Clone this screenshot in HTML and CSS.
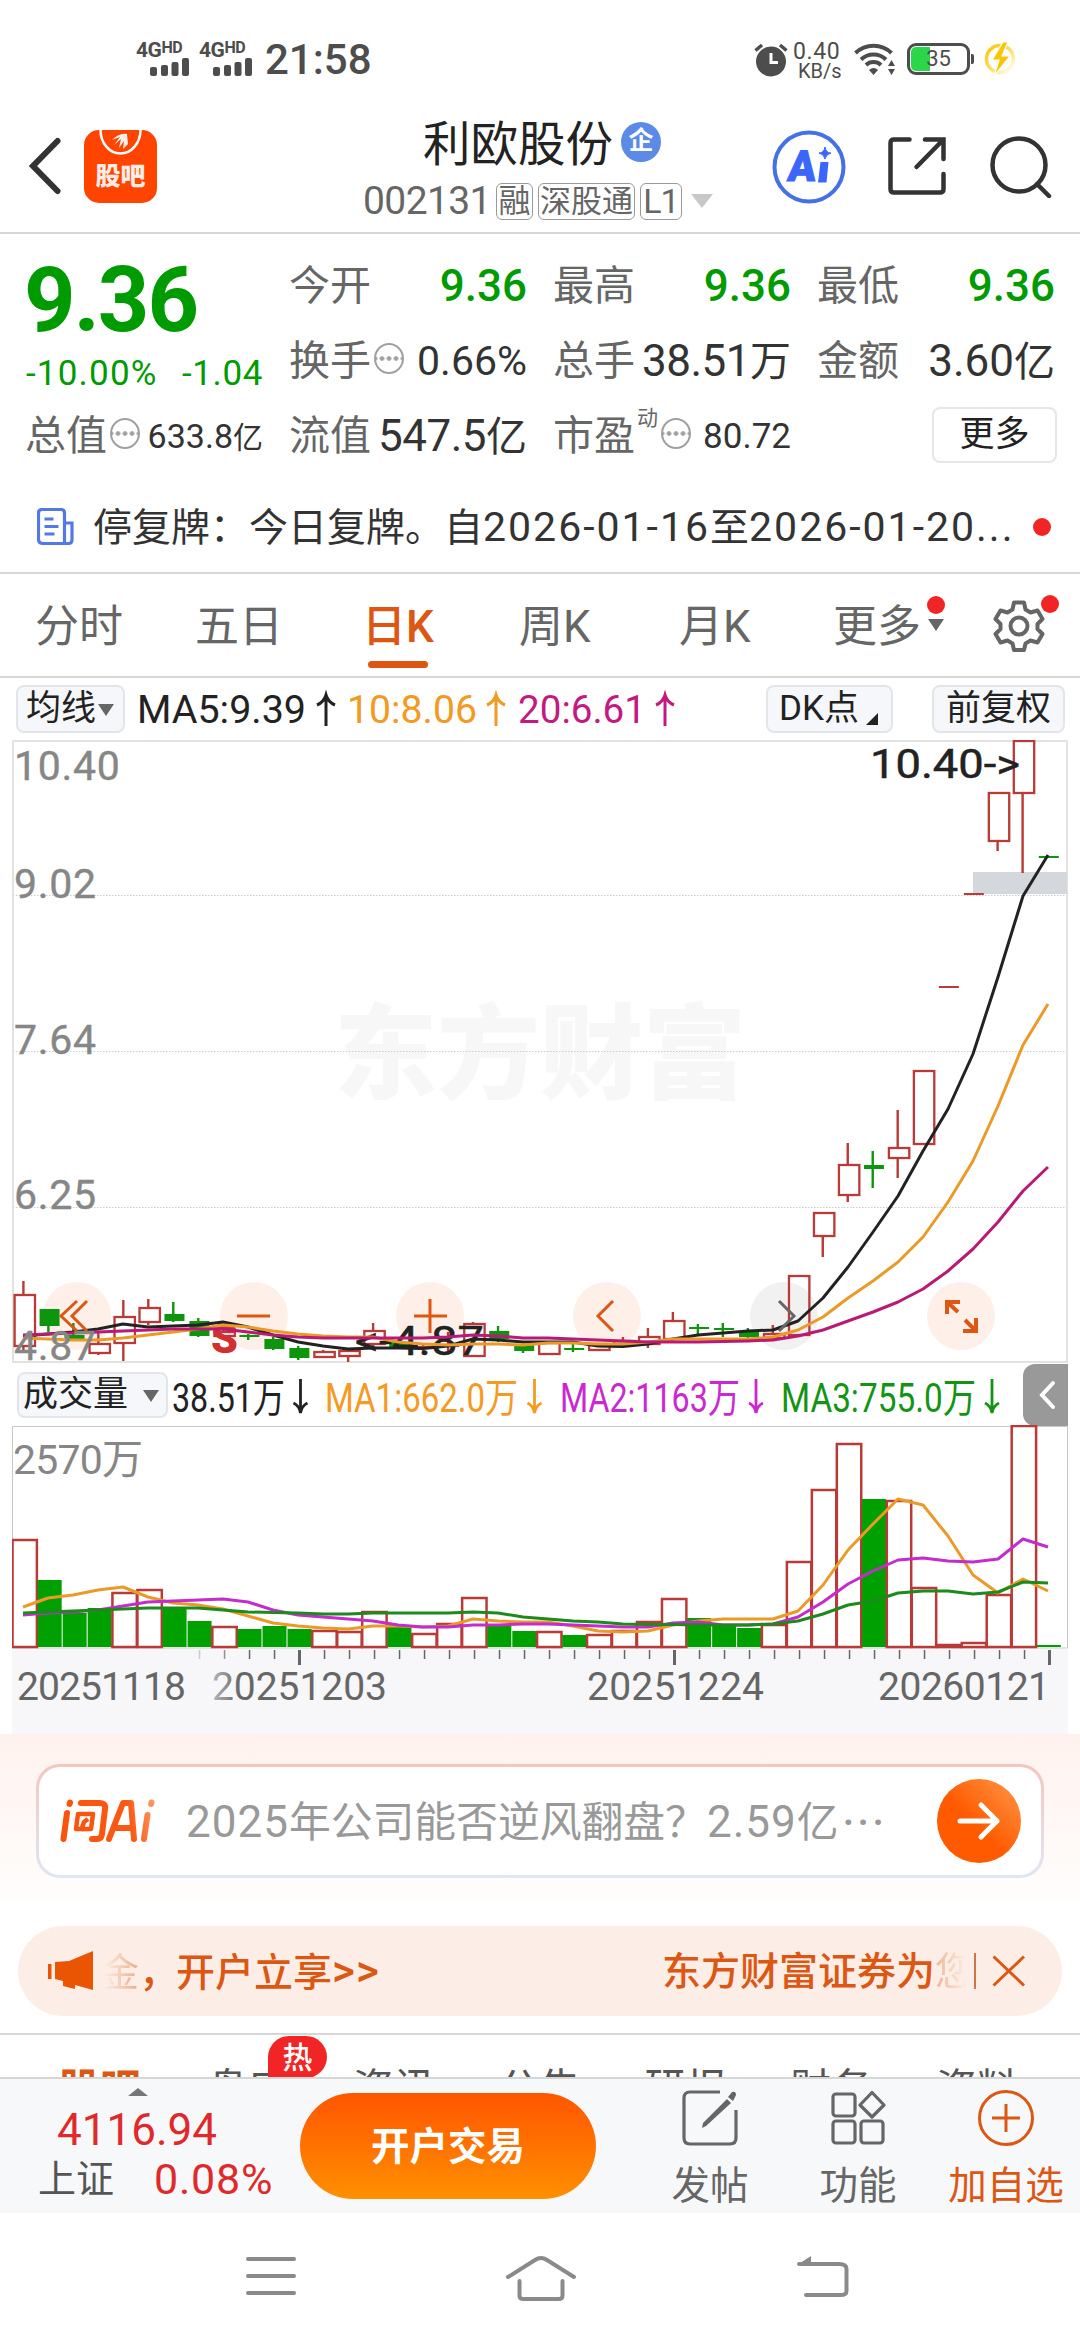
FILE: index.html
```html
<!DOCTYPE html>
<html lang="zh-CN">
<head>
<meta charset="utf-8">
<title>利欧股份 002131</title>
<link rel="stylesheet" href="styles.css">
</head>
<body>
<div class="phone">
  <div class="status">
    <div class="sig"><span class="net">4G<sup>HD</sup></span><svg width="40" height="18" viewBox="0 0 40 18"><g fill="#4d4d4d"><rect x="0" y="9" width="7" height="9" rx="2"/><rect x="11" y="7" width="7" height="11" rx="2"/><rect x="21.500" y="4" width="7" height="14" rx="2"/><rect x="32" y="0" width="7" height="18" rx="2"/></g></svg></div>
    <div class="sig"><span class="net">4G<sup>HD</sup></span><svg width="40" height="18" viewBox="0 0 40 18"><g fill="#4d4d4d"><rect x="0" y="9" width="7" height="9" rx="2"/><rect x="11" y="7" width="7" height="11" rx="2"/><rect x="21.500" y="4" width="7" height="14" rx="2"/><rect x="32" y="0" width="7" height="18" rx="2"/></g></svg></div>
    <span class="clock">21:58</span>
    <div class="status-right">
      <svg class="alarm" width="34" height="34" viewBox="0 0 34 34"><circle cx="17" cy="18.500" r="15" fill="#4d4d4d"/><path d="M1.500 7.500 8 2M32.500 7.500 26 2" stroke="#4d4d4d" stroke-width="3.500"/><path d="M17 10v9.500h7" fill="none" stroke="#fff" stroke-width="3"/></svg>
      <div class="speed"><span>0.40</span><span class="kb">KB/s</span></div>
      <svg class="wifi" width="42" height="34" viewBox="0 0 42 34"><g fill="none" stroke="#4d4d4d" stroke-width="4"><path d="M1.500 11a26 26 0 0 1 36 0"/><path d="M7 17.500a18 18 0 0 1 25 0"/><path d="M12 23a11 11 0 0 1 15 0"/></g><path d="M15 28q4.500-4 9 0l-4.500 5z" fill="#4d4d4d"/><path d="M34 24l3.500-6 3.500 6zM34 27l3.500 6 3.500-6z" fill="#4d4d4d"/></svg>
      <div class="battery"><span class="level"></span><span class="pct">35</span></div>
      <svg class="bolt" width="34" height="34" viewBox="0 0 34 34"><defs><linearGradient id="bg" x1="0" y1="0" x2="1" y2="1"><stop offset="0" stop-color="#fbc503"/><stop offset=".6" stop-color="#fde37a"/><stop offset=".9" stop-color="#fffbe8"/></linearGradient></defs><circle cx="17" cy="17" r="13.500" fill="none" stroke="url(#bg)" stroke-width="3.500"/><path d="M20 0 9 18h7l-5 16 16-20h-8l6-14z" fill="#fbc503" stroke="#fff" stroke-width="1.200"/></svg>
    </div>
  </div>

  <header class="head">
    <svg class="back" width="34" height="58" viewBox="0 0 34 58"><path d="M29.500 4 5 29 29.500 54" fill="none" stroke="#333" stroke-width="6" stroke-linecap="round"/></svg>
    <div class="logo"><svg width="73" height="30" viewBox="0 0 73 30"><path d="M16.500 0a20 23.500 0 0 0 40 0" fill="none" stroke="#fff" stroke-width="2.500"/><path d="M28 10C33 5 38 3 43 4L44 14 39 19 40 11 35 18 37 9 30 15 36 7z" fill="#fff" opacity=".92"/></svg><span>股吧</span></div>
    <div class="title">
      <div class="name"><span>利欧股份</span><i>企</i></div>
      <div class="code"><span class="num">002131</span><b>融</b><b class="w3">深股通</b><b class="l1">L1</b><i class="tri"></i></div>
    </div>
    <svg class="ai" width="74" height="74" viewBox="0 0 74 74"><circle cx="37" cy="37" r="34.500" fill="#fff" stroke="#4470ea" stroke-width="4"/><path d="M53 17q1 6 6 6-5 1-6 6-1-5-6-6 5 0 6-6z" fill="#3a66fb" stroke="#3a66fb"/><text x="15" y="51" font-size="43" font-weight="900" fill="#3a66fb" stroke="#3a66fb" stroke-width="1" textLength="28" lengthAdjust="spacingAndGlyphs" transform="skewX(-6) translate(5 0)">A</text><path d="M48.500 32h8l-2 20.500h-8.500z" fill="#3a66fb"/></svg>
    <svg class="share" width="58" height="58" viewBox="0 0 58 58"><path d="M21.500 2.500H6q-3.500 0-3.500 3.500v46q0 3.500 3.500 3.500h46q3.500 0 3.500-3.500V37M37 2.500h18.500V22M54 4 28.500 30" fill="none" stroke="#333" stroke-width="4.500" stroke-linecap="round"/></svg>
    <svg class="search" width="62" height="62" viewBox="0 0 62 62"><path d="M47 48 59 60" stroke="#333" stroke-width="4.500" stroke-linecap="round"/><circle cx="29" cy="29" r="26.500" fill="none" stroke="#333" stroke-width="4.500"/></svg>
  </header>

  <section class="quote">
    <div class="price"><div class="last">9.36</div><div class="chg"><span>-10.00%</span><span>-1.04</span></div></div>
    <div class="cell"><span>今开</span><em class="g">9.36</em></div>
    <div class="cell"><span>最高</span><em class="g">9.36</em></div>
    <div class="cell"><span>最低</span><em class="g">9.36</em></div>
    <div class="cell"><span>换手</span><i class="info"></i><em class="md">0.66%</em></div>
    <div class="cell"><span>总手</span><em class="n">38.51<u>万</u></em></div>
    <div class="cell"><span>金额</span><em>3.60<u>亿</u></em></div>
    <div class="cell"><span>总值</span><i class="info"></i><em class="sm s2">633.8<u>亿</u></em></div>
    <div class="cell"><span>流值</span><em class="n">547.5<u>亿</u></em></div>
    <div class="cell"><span>市盈</span><small>动</small><i class="info"></i><em class="sm">80.72</em></div>
    <div class="cell end"><button class="more">更多</button></div>
  </section>

  <div class="notice">
    <svg width="37" height="38" viewBox="0 0 37 38"><path d="M27.500 35.500H6q-4.500 0-4.500-4.500V5q0-3.500 3.500-3.500h19q3.500 0 3.500 3.500v30.500h4q3.500 0 3.500-3.500V15h-7M7.500 11h9M7.500 18.500h14M7.500 26h10" fill="none" stroke="#5478e4" stroke-width="3.200"/></svg>
    <p>停复牌：今日复牌。自<span>2026-01-16</span>至<span>2026-01-20...</span></p>
    <i class="dot"></i>
  </div>

  <nav class="period">
    <span>分时</span><span>五日</span><span class="on">日K</span><span>周K</span><span>月K</span>
    <span class="pm">更多<i class="dot"></i><i class="tri"></i></span>
    <span class="gear"><svg width="52" height="52" viewBox="0 0 52 52"><path d="M21 2.500h10l1.500 7 5 3 7-2 5 8.500-5 5v5l5 5-5 8.500-7-2-5 3-1.500 6.500H21l-1.500-6.500-5-3-7 2-5-8.500 5-5v-5l-5-5 5-8.500 7 2 5-3z" fill="none" stroke="#666" stroke-width="4" stroke-linejoin="round"/><circle cx="26" cy="26" r="8.500" fill="none" stroke="#666" stroke-width="4"/></svg><i class="dot"></i></span>
  </nav>

  <div class="ma">
    <div class="btn b1">均线<i class="tri"></i></div>
    <svg class="legend" width="560" height="48" viewBox="0 0 560 48">
      <g font-size="39.500">
        <text x="1" y="39" fill="#222" textLength="169" lengthAdjust="spacingAndGlyphs">MA5:9.39</text>
        <text x="211" y="39" fill="#f29a22" textLength="130" lengthAdjust="spacingAndGlyphs">10:8.06</text>
        <text x="382" y="39" fill="#c41a7f" textLength="128" lengthAdjust="spacingAndGlyphs">20:6.61</text>
      </g>
      <g fill="none" stroke-width="3"><path stroke="#222" d="M190 42V11M181 21q7-3 9-10 2 7 9 10"/><path stroke="#f29a22" d="M360 42V11M351 21q7-3 9-10 2 7 9 10"/><path stroke="#c41a7f" d="M529 42V11M520 21q7-3 9-10 2 7 9 10"/></g>
    </svg>
    <div class="btn b2">DK点<svg width="12" height="12" viewBox="0 0 12 12"><path d="M12 0v12H0z" fill="#222"/></svg></div>
    <div class="btn b3">前复权</div>
  </div>

  <svg id="kline" class="kline" width="1056" height="623" viewBox="12 741 1056 623"></svg>

  <div class="ma vol">
    <div class="btn b4">成交量<i class="tri"></i></div>
    <svg class="legend" width="836" height="54" viewBox="172 1370 836 54">
      <g font-size="40">
        <text x="172" y="1412" fill="#222" textLength="113" lengthAdjust="spacingAndGlyphs">38.51万</text>
        <text x="325" y="1412" fill="#f59a22" textLength="193" lengthAdjust="spacingAndGlyphs">MA1:662.0万</text>
        <text x="560" y="1412" fill="#cb29cf" textLength="180" lengthAdjust="spacingAndGlyphs">MA2:1163万</text>
        <text x="781" y="1412" fill="#149414" textLength="195" lengthAdjust="spacingAndGlyphs">MA3:755.0万</text>
      </g>
      <g fill="none" stroke-width="2.800"><path stroke="#222" d="M300.500 1379v33M293.500 1403q6 3 7 10 1-7 7-10"/><path stroke="#f59a22" d="M534.500 1379v33M527.500 1403q6 3 7 10 1-7 7-10"/><path stroke="#cb29cf" d="M756 1379v33M749 1403q6 3 7 10 1-7 7-10"/><path stroke="#149414" d="M992 1379v33M985 1403q6 3 7 10 1-7 7-10"/></g>
    </svg>
    <div class="handle"><svg width="18" height="30" viewBox="0 0 18 30"><path d="M15 3 4 15l11 12" fill="none" stroke="#fff" stroke-width="4" stroke-linecap="round"/></svg></div>
  </div>

  <svg id="volume" class="kline" width="1056" height="309" viewBox="12 1426 1056 309"></svg>

  <section class="ask">
    <div class="ask-card">
      <svg width="102" height="46" viewBox="0 0 100 46"><defs><linearGradient id="lg" gradientUnits="userSpaceOnUse" x1="0" x2="98" y1="30" y2="10"><stop offset="0" stop-color="#f9520b"/><stop offset=".7" stop-color="#fa5a14"/><stop offset="1" stop-color="#fba06c"/></linearGradient></defs><g fill="none" stroke="url(#lg)" stroke-width="6" stroke-linecap="round" stroke-linejoin="round"><path d="M10 4.500l-.5 1.500M7 15 3.500 41M21 5h19q6 0 5 6L42 36q-.5 5-5 5h-5"/><path d="M49 41 63 5h8l3 36M56 30h15M87.500 17 84 41M91.500 4.500l-.3 1.500"/></g><path d="M18 16h15l-2 15H16zM21 33l3-9 4-3" fill="none" stroke="url(#lg)" stroke-width="4.500" stroke-linejoin="round"/></svg>
      <p><span>2025</span>年公司能否逆风翻盘？<span>2.59</span>亿<b>···</b></p>
      <div class="go"><svg width="44" height="40" viewBox="0 0 44 40"><path d="M3 20h37M24 4l16 16-16 16" fill="none" stroke="#fff" stroke-width="5" stroke-linecap="round" stroke-linejoin="round"/></svg></div>
    </div>
  </section>

  <div class="banner">
    <svg width="48" height="40" viewBox="0 0 48 40"><path d="M1 13h3.500v15H1zM8 11l14-1L46 0v39l-18-5v4l-12-3v-5l-8-2z" fill="#ea5504"/></svg>
    <p class="m1"><b>金</b>，<span>开户立享<u>&gt;&gt;</u></span></p>
    <p class="m2">东方财富证券为<b>您</b></p>
    <i class="bar"></i>
    <svg width="34" height="32" viewBox="0 0 34 32"><path d="M1.500 1.500 32 30.500M32 1.500 1.500 30.500" stroke="#dd5712" stroke-width="3"/></svg>
  </div>

  <div class="tabs">
    <span class="on">股吧</span><span>盘口</span><span>资讯</span><span>公告</span><span>研报</span><span>财务</span><span>资料</span>
    <i class="hot">热</i>
  </div>

  <footer class="dock">
    <div class="index"><i class="up"></i><div class="pt">4116.94</div><div class="rt"><span>上证</span><span class="r">0.08%</span></div></div>
    <button class="trade">开户交易</button>
    <div class="act a1"><svg width="56" height="56" viewBox="0 0 56 56"><path d="M38 2H8Q2 2 2 8v40q0 6 6 6h40q6 0 6-6V20" fill="none" stroke="#666" stroke-width="3.200"/><path d="M50 2q4-1 4 3l-3 6-5-4zM45 9l4 4L24 36l-4 2 1-5z" fill="#666"/></svg><span>发帖</span></div>
    <div class="act a2"><svg width="56" height="56" viewBox="0 0 56 56"><g fill="none" stroke="#666" stroke-width="3.200"><rect x="3" y="4" width="22" height="22" rx="3"/><rect x="3" y="31" width="22" height="22" rx="3"/><rect x="31" y="31" width="22" height="22" rx="3"/><path d="M42 2.500 54 15 42 27 30 15z" stroke-linejoin="round"/></g></svg><span>功能</span></div>
    <div class="act a3"><svg width="58" height="58" viewBox="0 0 58 58"><circle cx="29" cy="29" r="26.500" fill="none" stroke="#dd5712" stroke-width="3"/><path d="M29 15v28M15 29h28" stroke="#dd5712" stroke-width="3"/></svg><span>加自选</span></div>
  </footer>

  <div class="sysnav">
    <svg width="50" height="42" viewBox="0 0 50 42"><path d="M2 4h46M2 21h46M2 38h46" stroke="#8a8a8a" stroke-width="4" stroke-linecap="round"/></svg>
    <svg class="home" width="72" height="46" viewBox="0 0 72 46"><path d="M3 22 30 5q6-4 12 0l27 17M14.500 26v15q0 3 4 3h35q4 0 4-3V26" fill="none" stroke="#8a8a8a" stroke-width="4" stroke-linecap="round"/></svg>
    <svg class="ret" width="52" height="44" viewBox="0 0 52 44"><path d="M0 10 14 1v9z" fill="#8a8a8a"/><path d="M2 9h40q7.500 0 7.500 5v22q0 4-6 4H9" fill="none" stroke="#8a8a8a" stroke-width="4" stroke-linecap="round"/></svg>
  </div>
</div>
<script src="app.js"></script>
</body>
</html>
```
FILE: styles.css
```css
* { box-sizing: border-box; }
body { margin: 0; background: #fff; font-family: Roboto, "Noto Sans CJK SC", sans-serif; color: #333; }
i, em, u { font-style: normal; text-decoration: none; }
p { margin: 0; }
button { font: inherit; }
svg { display: block; flex: none; }
.phone { width: 1080px; height: 2340px; overflow: hidden; display: flex; flex-direction: column; }
.phone > * { flex: none; }
.dot { width: 18px; height: 18px; border-radius: 50%; background: #f12525; }
.tri { width: 0; height: 0; border: 8px solid transparent; border-top: 12px solid #666; border-bottom: 0; }

.status { height: 118px; padding: 42px 63px 0 136px; display: flex; align-items: flex-start; color: #4d4d4d; }
.sig { width: 63px; display: flex; flex-direction: column; }
.sig svg { margin-left: 14px; }
.net { font: 700 21px/16px Roboto, sans-serif; height: 16px; white-space: nowrap; letter-spacing: -.5px; }
.net sup { font-size: 16px; line-height: 1px; vertical-align: 4px; }
.clock { margin-left: 3px; font-size: 42px; line-height: 36px; font-weight: 500; }
.status-right { margin-left: auto; display: flex; align-items: flex-start; }
.alarm { margin-top: 1px; }
.speed { margin-left: 5px; width: 50px; display: flex; flex-direction: column; font-size: 23px; line-height: 19px; letter-spacing: .6px; }
.speed .kb { margin: 1px 0 0 5px; font-size: 20px; line-height: 18px; letter-spacing: 0; }
.wifi { margin-left: 11px; }
.battery { position: relative; margin: 1px 0 0 11px; width: 63px; height: 32px; border: 3px solid #4d4d4d; border-radius: 9px; display: flex; align-items: center; justify-content: center; }
.battery::after { content: ""; position: absolute; right: -7px; top: 8px; width: 3px; height: 10px; background: #4d4d4d; border-radius: 0 2px 2px 0; }
.level { position: absolute; left: 1px; top: 1px; bottom: 1px; width: 19px; background: #2bd64a; border-radius: 5px 0 0 5px; }
.pct { position: relative; font-size: 22px; line-height: 26px; }
.bolt { margin-left: 13px; }

.head { height: 116px; padding: 0 28px 0 28px; border-bottom: 2px solid #d6d6d6; display: flex; align-items: flex-start; }
.back { margin-top: 19px; }
.logo { margin: 12px 0 0 22px; width: 73px; height: 73px; border-radius: 15px; background: #ff4400; overflow: hidden; display: flex; flex-direction: column; align-items: center; }
.logo span { font-size: 25px; line-height: 34px; font-weight: 900; color: #ffece5; }
.title { width: 400px; margin-left: 206px; }
.name { display: flex; padding-left: 60px; height: 54px; align-items: center; gap: 8px; }
.name span { font-size: 47.500px; line-height: 50px; color: #222; font-weight: 400; }
.name i { width: 40px; height: 40px; margin-top: -7px; border-radius: 50%; background: #5b8be6; color: #fff; font-size: 25px; line-height: 38px; text-align: center; font-weight: 700; }
.code { display: flex; align-items: center; margin-top: 9px; height: 40px; gap: 5px; color: #666; }
.code .num { width: 128px; font-size: 39px; line-height: 40px; letter-spacing: -.6px; }
.code b { height: 37px; width: 37px; border: 1.500px solid #999; border-radius: 6px; font-weight: 400; font-size: 32px; line-height: 35px; display: flex; justify-content: center; }
.code b.w3 { width: 97px; font-size: 31px; }
.code b.l1 { width: 42px; font-size: 34px; letter-spacing: -1px; }
.code .tri { margin-left: 4px; border-width: 14px 11px 0; border-top-color: #c8c8c8; }
.ai { margin: 12px 0 0 9px; }
.share { margin: 19px 0 0 42px; }
.search { margin: 18px 0 0 auto; }

.quote { height: 239px; padding: 15px 25px 0 26px; display: grid; grid-template-columns: repeat(4, 237px); grid-template-rows: repeat(3, 75px); column-gap: 27px; }
.price { grid-row: 1 / 3; color: #009b00; white-space: nowrap; }
.last { font-size: 90px; line-height: 104px; font-weight: 700; margin-left: -2px; letter-spacing: -2px; }
.chg { display: flex; justify-content: space-between; font-size: 35px; line-height: 42px; letter-spacing: 1.200px; }
.chg span + span { letter-spacing: .6px; }
.cell { display: flex; align-items: center; white-space: nowrap; }
.cell span { margin-left: -1px; font-size: 41px; line-height: 77px; color: #666; }
.cell em { margin-left: auto; font-size: 44px; line-height: 77px; }
.cell em u { font-size: 41px; }
.cell em.n { letter-spacing: -.5px; }
.cell em.n u { letter-spacing: 0; }
.cell em.g { color: #009b00; font-weight: 500; }
.cell em.md { font-size: 41px; }
.cell em.sm { font-size: 35px; }
.cell em.s2 { font-size: 34px; }
.cell em.s2 u { font-size: 30px; }
.cell small { font-size: 21px; line-height: 20px; align-self: flex-start; margin: 9px 0 0 2px; color: #666; }
.info { flex: none; width: 30px; height: 31px; margin: -7px 0 0 3px; border: 2px solid #a0a0a0; border-radius: 50%; background: radial-gradient(circle 2.500px, #a0a0a0 80%, transparent) 2.500px 0 / 7px 27px repeat-x; }
.end { justify-content: flex-end; }
.more { width: 125px; height: 56px; margin: -3px -2px 0 0; padding: 0; border: 2px solid #e6e6e6; border-radius: 8px; background: #fff; color: #222; font-size: 35px; line-height: 50px; }

.notice { height: 101px; padding: 9px 29px 0 37px; display: flex; align-items: center; border-bottom: 2px solid #d6d6d6; }
.notice p { margin-left: 19px; font-size: 39px; line-height: 50px; white-space: nowrap; color: #333; }
.notice span { font-size: 41px; letter-spacing: 2px; }
.notice .dot { margin-left: auto; }

.period { height: 104px; padding-left: 35px; display: flex; align-items: center; border-bottom: 2px solid #d6d6d6; font-size: 44px; color: #666; }
.period span { flex: none; width: 160px; line-height: 105px; height: 100px; white-space: nowrap; }
.period .on { color: #dd5712; font-weight: 500; position: relative; margin-left: 7px; width: 157px; }
.period .on::after { content: ""; position: absolute; left: 6px; bottom: 7px; width: 60px; height: 7px; border-radius: 4px; background: #dd5712; }
.period .pm { position: relative; width: 160px; margin-left: -6px; }
.pm .dot { position: absolute; left: 94px; top: 21px; }
.pm .tri { position: absolute; left: 95px; top: 44px; }
.period .gear { position: relative; width: 60px; padding-top: 25px; }
.gear .dot { position: absolute; left: 48px; top: 20px; }

.ma { height: 62px; padding: 7px 0 0 16px; display: flex; }
.btn { height: 48px; border: 2px solid #e3e5ea; border-radius: 8px; background: #f6f7fa; color: #222; font-size: 35px; line-height: 46px; white-space: nowrap; display: flex; align-items: center; }
.b1 { width: 109px; padding-left: 8px; gap: 2px; }
.b1 .tri, .b4 .tri { margin-top: 2px; }
.ma .legend { margin: -1px 0 0 11px; }
.b2 { width: 127px; margin-left: 70px; padding-left: 11px; gap: 7px; }
.b2 svg { margin-top: 20px; }
.b3 { width: 133px; margin-left: 39px; padding-left: 12px; }
.kline { margin-left: 12px; }
.vol { padding-top: 9px; padding-left: 17px; }
.vol .btn { height: 46px; line-height: 44px; }
.b4 { width: 151px; padding-left: 4px; gap: 15px; }
.vol .legend { margin: -2px 0 0 4px; }
.handle { margin: -8px 0 0 15px; width: 45px; height: 62px; border-radius: 12px 0 0 12px; background: #999; padding: 16px 0 0 15px; }

.ask { height: 165px; padding: 30px 36px 0; background: linear-gradient(#fff2ee, #fffdfc); }
.ask-card { height: 114px; padding: 0 20px 0 20px; border: 3px solid transparent; border-radius: 24px; background: linear-gradient(#fff, #fff) padding-box, linear-gradient(#f4c6be, #dfe7f2) border-box; display: flex; align-items: center; }
.ask-card p { margin-left: 25px; padding-top: 3px; font-size: 41.800px; line-height: 60px; color: #999; white-space: nowrap; }
.ask-card p span { font-size: 44px; letter-spacing: 1px; }
.ask-card p b { font-weight: 500; letter-spacing: 3px; margin-left: 4px; }
.go { margin-left: auto; width: 84px; height: 84px; border-radius: 50%; background: linear-gradient(45deg, #ff5a00 45%, #ff9a4a); display: flex; align-items: center; justify-content: center; }

.banner { height: 90px; margin: 27px 18px 0; padding: 0 36px 0 29px; border-radius: 45px; background: #fceee6; display: flex; align-items: center; color: #dd5712; font-size: 39px; font-weight: 500; white-space: nowrap; }
.banner p { line-height: 90px; padding-top: 2px; }
.banner b { font-weight: 400; color: transparent; background: linear-gradient(90deg, #fceee6 10%, #ecab87); background-clip: text; -webkit-background-clip: text; }
.m1 { margin-left: 5px; }
.m1 span { margin-left: -2px; }
.m1 u { font-size: 44px; letter-spacing: 1px; }
.m2 { margin-left: auto; }
.m2 b { background-image: linear-gradient(90deg, #eeb493, #fceee6 80%); }
.bar { width: 2px; height: 36px; margin: 0 16px 0 0; background: #c9774b; }

.tabs { position: relative; height: 44px; margin-top: 17px; padding: 29px 0 0 59px; border-top: 2px solid #d6d6d6; overflow: hidden; display: flex; font-size: 41px; line-height: 50px; color: #555; }
.tabs span { flex: none; width: 145.800px; height: 50px; white-space: nowrap; }
.tabs .on { color: #dd5712; font-weight: 700; width: 148px; }
.hot { position: absolute; left: 268px; top: 1px; width: 59px; height: 42px; border-radius: 21px 21px 21px 0; background: #f12525; color: #fff; font-size: 30px; font-weight: 500; line-height: 43px; text-align: center; }

.dock { height: 136px; border-top: 2px solid #d6d6d6; background: #f6f8fa; display: flex; }
.index { flex: none; width: 300px; display: flex; flex-direction: column; color: #e0292b; }
.up { margin: 9px 0 0 128px; width: 0; border: 10px solid transparent; border-top: 0; border-bottom: 8px solid #777; }
.pt { margin: 9px 0 0 57px; font-size: 44px; line-height: 50px; }
.rt { display: flex; padding-left: 38px; line-height: 46px; margin-top: 1px; font-size: 38px; color: #555; white-space: nowrap; }
.rt .r { margin-left: 40px; font-size: 43px; letter-spacing: .8px; color: #e0292b; }
.trade { flex: none; width: 296px; height: 106px; margin-top: 14px; padding: 2px 0 0; border: 0; border-radius: 53px; background: linear-gradient(#ff5500, #ff9000); color: #fff; font-size: 38.500px; font-weight: 700; line-height: 102px; }
.act { flex: none; width: 148px; padding-top: 10px; display: flex; flex-direction: column; align-items: center; font-size: 38.500px; line-height: 44px; color: #666; white-space: nowrap; }
.act svg { height: 58px; }
.act span { margin-top: 17px; }
.a1 { margin-left: 40px; }
.a3 { color: #dd5712; }

.sysnav { height: 126px; padding: 42px 0 0 246px; display: flex; align-items: flex-start; }
.home { margin-left: 209px; }
.ret { margin-left: 220px; }
```
FILE: app.js
```javascript
const NS = 'http://www.w3.org/2000/svg';
const RED = '#b93a36', GREEN = '#0d960d';

function add(root, tag, attrs, text) {
  const el = document.createElementNS(NS, tag);
  for (const k in attrs) el.setAttribute(k, attrs[k]);
  if (text) el.textContent = text;
  root.appendChild(el);
  return el;
}
const line = (root, pts, color) => add(root, 'polyline', { points: pts, fill: 'none', stroke: color, 'stroke-width': 3, 'stroke-linejoin': 'round' });
const series = (ys, step = 25) => ys.map((y, i) => (23 + i * step) + ',' + y).join(' ');

/* [wick top, body top, body bottom, wick bottom, rising] */
const candles = [
  [1282,1296,1347,1352,1],[1310,1310,1327,1333,0],[1324,1336,1340,1341,0],[1332,1345,1354,1356,1],[1301,1318,1344,1362,1],
  [1300,1309,1323,1326,1],[1303,1315,1322,1323,0],[1319,1322,1337,1338,0],[1330,1333,1337,1341,1],[1335,1336,1338,1341,0],
  [1338,1340,1350,1351,0],[1347,1349,1359,1361,0],[1351,1353,1358,1359,1],[1352,1352,1357,1363,1],[1324,1332,1345,1351,1],
  [1341,1343,1349,1350,0],[1344,1347,1350,1353,1],[1333,1345,1348,1355,1],[1323,1325,1357,1357,1],[1327,1332,1340,1343,0],
  [1346,1346,1352,1354,0],[1343,1344,1355,1355,1],[1345,1349,1351,1353,0],[1346,1346,1351,1351,1],[1338,1342,1346,1346,1],
  [1329,1338,1345,1349,1],[1313,1322,1340,1340,1],[1325,1328,1330,1335,0],[1324,1329,1331,1338,0],[1329,1333,1338,1339,0],
  [1326,1335,1339,1339,1],[1277,1277,1336,1336,1],[1214,1214,1237,1258,1],[1144,1166,1196,1203,1],[1152,1166,1170,1189,0],
  [1111,1149,1159,1179,1],[1072,1072,1145,1145,1],[987,987,989,989,1],[894,894,896,896,1],[794,794,842,852,1],
  [742,742,794,874,1],[857,857,859,859,0]
];

const k = document.getElementById('kline');
add(k, 'text', { x: 334, y: 1092, 'font-size': 103, 'font-weight': 900, fill: '#f7f7f7', textLength: 412 }, '东方财富');
[896, 1052, 1208].forEach(y => add(k, 'line', { x1: 13, x2: 1066, y1: y + .5, y2: y + .5, stroke: '#ccc', 'stroke-dasharray': '1.500 1.500' }));
add(k, 'path', { d: 'M13 742H1067V1363H13z', fill: 'none', stroke: '#e2e2e2', 'stroke-width': 2 });
[77, 254, 430, 607, 784, 961].forEach((x, i) => add(k, 'circle', { cx: x, cy: 1317, r: 34, fill: i === 4 ? '#f1f1f1' : '#fef0e9' }));
add(k, 'rect', { x: 973, y: 873, width: 94, height: 22, fill: '#d4d7dc' });

candles.forEach(([wt, t, b, wb, up], i) => {
  const x = 23.3 + i * 24.98, c = up ? RED : GREEN;
  if (t > wt) add(k, 'rect', { x: x - 1.1, y: wt, width: 2.4, height: t - wt, fill: c });
  if (wb > b) add(k, 'rect', { x: x - 1.1, y: b, width: 2.4, height: wb - b, fill: c });
  if (up && b - t > 3) add(k, 'rect', { x: x - 8.7, y: t, width: 20.4, height: b - t, fill: 'none', stroke: c, 'stroke-width': 2.3 });
  else add(k, 'rect', { x: x - 8.7, y: t, width: 20, height: b - t, fill: c });
});

const mark = { 'font-size': 41, fill: '#222', stroke: '#222', 'stroke-width': .5 };
add(k, 'text', { x: 211, y: 1354, 'font-size': 43, 'font-weight': 900, fill: '#d32f2f' }, 'S');
add(k, 'text', { ...mark, x: 870, y: 779, textLength: 150, lengthAdjust: 'spacingAndGlyphs' }, '10.40->');
add(k, 'text', { ...mark, x: 355, y: 1356, textLength: 129, lengthAdjust: 'spacingAndGlyphs' }, '<-4.87');

line(k, series([1337,1335,1333,1330,1325,1328,1327,1326,1323,1328,1336,1343,1347,1350,1349,1349,1349.5,1347,1340,1341,1343,1343,1343,1347,1347.5,1345,1340,1336,1334,1332,1331,1322,1299,1268,1233,1197,1152,1110,1055,978,897,856]), '#222');
line(k, series([1339,1340,1341,1341,1339,1336,1333,1330,1326,1328,1332,1335,1337,1338,1338,1343,1345,1346,1345,1345,1346,1344,1344,1345,1345,1343,1340,1340,1340,1340,1338,1331,1318,1299,1282,1263,1238,1203,1162,1107,1046,1005]), '#eb9a28');
line(k, series([1336,1335,1334,1333,1332,1331,1330,1330,1330,1333,1336,1338,1339,1339,1339,1339,1339,1338,1336,1337,1339,1339,1340,1341,1342,1343,1343,1343,1342.5,1342,1341,1337,1331,1322,1313,1303,1290,1272,1250,1223,1192,1168]), '#b81a75');

[['10.40', 781], ['9.02', 899], ['7.64', 1055], ['6.25', 1210], ['4.87', 1361]].forEach(([t, y]) =>
  add(k, 'text', { x: 14, y, 'font-size': 41, fill: '#868686', stroke: '#868686', 'stroke-width': .4, 'letter-spacing': .7 }, t));

const tool = { fill: 'none', stroke: '#dd5712', 'stroke-width': 3 };
add(k, 'path', { ...tool, d: 'M77 1302 61 1317 77 1332M87 1302 72 1317 87 1332' });
add(k, 'path', { ...tool, d: 'M237 1317H270M414 1317H447M430 1300V1334' });
add(k, 'path', { ...tool, d: 'M613 1302 598 1317 613 1332' });
add(k, 'path', { ...tool, stroke: '#666', d: 'M779 1302 794 1317 779 1332' });
add(k, 'path', { ...tool, 'stroke-width': 4, d: 'M947 1315V1303H960M947 1303 958 1313M976 1319V1332H963M976 1332 965 1321' });

/* [bar top, rising] */
const volumes = [[1541,1],[1581,0],[1614,0],[1609,0],[1594,1],[1591,1],[1610,0],[1622,0],[1628,1],[1630,0],[1627,0],[1630,0],[1632,1],[1633,1],[1613,1],[1628,0],[1635,1],[1625,1],[1599,1],[1625,0],[1632,0],[1633,1],[1636,0],[1636,1],[1632,1],[1623,1],[1600,1],[1619,0],[1626,0],[1629,0],[1626,1],[1563,1],[1491,1],[1445,1],[1500,0],[1502,1],[1589,1],[1646,1],[1644,1],[1596,1],[1427,1],[1646,0]];
const v = document.getElementById('volume');
add(v, 'rect', { x: 12, y: 1650, width: 1056, height: 85, fill: '#f7f7fa' });
add(v, 'path', { d: 'M12.5 1427.500H1067.500V1649H12.500z', fill: 'none', stroke: '#c8c8c8' });
volumes.forEach(([t, up], i) => {
  const x = 12.2 + i * 24.98;
  if (up) add(v, 'rect', { x: x + .3, y: t, width: 24.4, height: 1648 - t, fill: 'none', stroke: RED, 'stroke-width': 2.5 });
  else add(v, 'rect', { x: x + .5, y: t, width: 24, height: 1648 - t, fill: '#00a000' });
});
line(v, series([1608,1599,1596,1591,1588,1598,1604,1606,1610,1617,1624,1627,1629,1630,1627,1627,1628,1627,1620,1622,1623,1623,1627,1632,1633,1632,1626,1622,1620,1620,1620,1612,1586,1551,1525,1500,1506,1537,1576,1594,1580,1592]), '#eb9a28');
line(v, series([1616,1614,1613,1611,1607,1603,1602,1601,1600,1603,1611,1616,1618,1620,1622,1626,1628,1628,1626,1626,1625,1625,1626,1627,1628,1628,1624,1623,1626,1626,1625,1618,1603,1585,1572,1561,1559,1562,1563,1560,1540,1548]), '#c42ccb');
line(v, series([1614,1613,1612,1611,1610,1609,1609,1609,1611,1613,1613.5,1614,1615,1615,1614,1614,1614,1614,1613,1614,1618,1620,1622,1623,1625,1625.5,1625.5,1626,1626,1626,1625,1622,1615,1606,1602,1594,1592,1592,1595,1593,1583,1584]), '#1c8a1c');
add(v, 'text', { x: 13, y: 1475, 'font-size': 41, fill: '#868686', textLength: 130 }, '2570万');

for (let i = 7; i <= 41; i++) {
  const major = i === 11 || i === 26 || i === 41;
  add(v, 'rect', { x: 24.5 + i * 25 - (major ? 1.5 : .7), y: 1651, width: major ? 3 : 1.5, height: major ? 15 : 9, fill: '#666', opacity: i === 7 ? .3 : i === 8 ? .7 : 1 });
}
const defs = add(v, 'defs', {});
const fade = add(defs, 'linearGradient', { id: 'fade', gradientUnits: 'userSpaceOnUse', x1: 205, x2: 240, y1: 0, y2: 0 });
add(fade, 'stop', { offset: 0, 'stop-color': '#ccc' });
add(fade, 'stop', { offset: 1, 'stop-color': '#666' });
[['20251118', 17, '#666', 169], ['20251203', 212, 'url(#fade)', 175], ['20251224', 587, '#666', 177], ['20260121', 878, '#666', 172]].forEach(([t, x, fill, w]) =>
  add(v, 'text', { x, y: 1701, 'font-size': 39, fill, textLength: w }, t));
```
